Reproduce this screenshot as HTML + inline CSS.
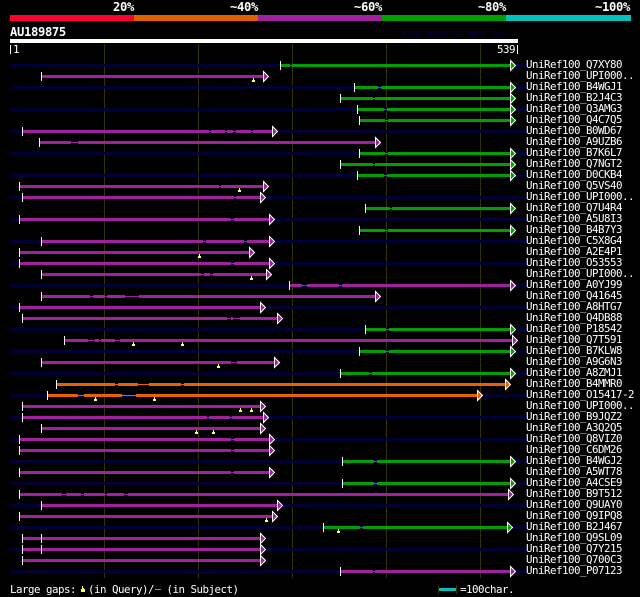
<!DOCTYPE html>
<html lang="en"><head><meta charset="utf-8"><title>AU189875</title>
<style>
html,body{margin:0;padding:0;background:#000;width:640px;height:597px;overflow:hidden}
svg{display:block}
text{font-family:"DejaVu Sans Mono","Liberation Mono",monospace;fill:#fff;font-size:10.8px;letter-spacing:-.5px}
.b{font-weight:bold;font-size:12.2px;letter-spacing:-.35px}
</style></head><body>
<svg width="640" height="597" viewBox="0 0 640 597" xmlns="http://www.w3.org/2000/svg">
<defs>
<path id="t" d="M.5-5L5.5 0L.5 5Z" stroke="#fff" stroke-width="1"/>
<path id="m" d="M0 0h1v2h1v2h-3v-2h1z" fill="#ffff66"/>
</defs>
<rect width="640" height="597" fill="#000"/>
<g shape-rendering="crispEdges">
<rect x="10" y="15" width="124" height="6" fill="#ff0033"/>
<rect x="134" y="15" width="124" height="6" fill="#e06000"/>
<rect x="258" y="15" width="124" height="6" fill="#a020a0"/>
<rect x="382" y="15" width="124" height="6" fill="#00a000"/>
<rect x="506" y="15" width="125" height="6" fill="#00c0c0"/>
<rect x="10" y="39" width="508" height="4" fill="#fff"/>
<path d="M104.5 44V578M198.5 44V578M292.5 44V578M386.5 44V578M480.5 44V578" stroke="#333300" fill="none"/>
<path fill="#000033" d="M10 64H527V67H10ZM10 86H527V89H10ZM10 108H527V111H10ZM10 130H527V133H10ZM10 152H527V155H10ZM10 174H527V177H10ZM10 196H527V199H10ZM10 218H527V221H10ZM10 240H527V243H10ZM10 262H527V265H10ZM10 284H527V287H10ZM10 306H527V309H10ZM10 328H527V331H10ZM10 350H527V353H10ZM10 372H527V375H10ZM10 394H527V397H10ZM10 416H527V419H10ZM10 438H527V441H10ZM10 460H527V463H10ZM10 482H527V485H10ZM10 504H527V507H10ZM10 526H527V529H10ZM10 548H527V551H10ZM10 570H527V573H10Z"/>

<!-- green -->
<path fill="#00a000" d="M280 64H290V67H280ZM292 64H510V67H292ZM354 86H378V89H354ZM381 86H510V89H381ZM340 97H373V100H340ZM375 97H510V100H375ZM357 108H384V111H357ZM387 108H510V111H387ZM359 119H385V122H359ZM388 119H510V122H388ZM359 152H385V155H359ZM388 152H510V155H388ZM340 163H373V166H340ZM375 163H510V166H375ZM357 174H384V177H357ZM387 174H510V177H387ZM365 207H390V210H365ZM392 207H510V210H392ZM359 229H385V232H359ZM388 229H510V232H388ZM365 328H386V331H365ZM389 328H510V331H389ZM359 350H386V353H359ZM389 350H510V353H389ZM340 372H369V375H340ZM372 372H510V375H372ZM342 460H374V463H342ZM377 460H510V463H377ZM342 482H374V485H342ZM377 482H510V485H377ZM323 526H360V529H323ZM363 526H507V529H363Z"/>
<path stroke="#00a000" stroke-width="1" fill="none" d="M290 65.5H292M378 87.5H381M373 98.5H375M384 109.5H387M385 120.5H388M385 153.5H388M373 164.5H375M384 175.5H387M390 208.5H392M385 230.5H388M386 329.5H389M386 351.5H389M369 373.5H372M374 461.5H377M374 483.5H377M360 527.5H363"/>

<!-- purple -->
<path fill="#a020a0" d="M41 75H263V78H41ZM22 130H209V133H22ZM211 130H225V133H211ZM227 130H233V133H227ZM236 130H251V133H236ZM253 130H272V133H253ZM39 141H71V144H39ZM78 141H375V144H78ZM19 185H219V188H19ZM221 185H263V188H221ZM22 196H234V199H22ZM236 196H260V199H236ZM19 218H231V221H19ZM234 218H269V221H234ZM41 240H203V243H41ZM206 240H244V243H206ZM247 240H269V243H247ZM19 251H249V254H19ZM19 262H231V265H19ZM234 262H269V265H234ZM41 273H201V276H41ZM204 273H210V276H204ZM213 273H266V276H213ZM289 284H302V287H289ZM307 284H339V287H307ZM342 284H510V287H342ZM41 295H90V298H41ZM93 295H105V298H93ZM107 295H125V298H107ZM139 295H375V298H139ZM19 306H260V309H19ZM22 317H227V320H22ZM231 317H233V320H231ZM240 317H277V320H240ZM64 339H88V342H64ZM95 339H99V342H95ZM101 339H115V342H101ZM120 339H512V342H120ZM41 361H231V364H41ZM237 361H274V364H237ZM22 405H260V408H22ZM22 416H207V419H22ZM209 416H230V419H209ZM232 416H263V419H232ZM41 427H260V430H41ZM19 438H231V441H19ZM234 438H269V441H234ZM19 449H231V452H19ZM234 449H269V452H234ZM19 471H231V474H19ZM234 471H269V474H234ZM19 493H62V496H19ZM66 493H81V496H66ZM84 493H105V496H84ZM107 493H124V496H107ZM128 493H508V496H128ZM41 504H277V507H41ZM19 515H272V518H19ZM22 537H260V540H22ZM22 548H260V551H22ZM22 559H260V562H22ZM340 570H373V573H340ZM375 570H510V573H375Z"/>
<path stroke="#a020a0" stroke-width="1" fill="none" d="M209 131.5H211M225 131.5H227M233 131.5H236M251 131.5H253M71 142.5H78M219 186.5H221M234 197.5H236M231 219.5H234M203 241.5H206M244 241.5H247M231 263.5H234M201 274.5H204M210 274.5H213M302 285.5H307M339 285.5H342M90 296.5H93M105 296.5H107M125 296.5H139M227 318.5H231M233 318.5H240M88 340.5H95M99 340.5H101M115 340.5H120M231 362.5H237M207 417.5H209M230 417.5H232M231 439.5H234M231 450.5H234M231 472.5H234M62 494.5H66M81 494.5H84M105 494.5H107M124 494.5H128M373 571.5H375"/>

<!-- orange -->
<path fill="#e86000" d="M56 383H115V386H56ZM118 383H138V386H118ZM149 383H181V386H149ZM184 383H505V386H184ZM47 394H78V397H47ZM84 394H122V397H84ZM136 394H477V397H136Z"/>
<path stroke="#e86000" stroke-width="1" fill="none" d="M115 384.5H118M138 384.5H149M181 384.5H184M78 395.5H84M122 395.5H136"/>

<!-- start ticks -->
<path stroke="#fff" stroke-width="1" fill="none" d="M280.5 61v9M41.5 72v9M354.5 83v9M340.5 94v9M357.5 105v9M359.5 116v9M22.5 127v9M39.5 138v9M359.5 149v9M340.5 160v9M357.5 171v9M19.5 182v9M22.5 193v9M365.5 204v9M19.5 215v9M359.5 226v9M41.5 237v9M19.5 248v9M19.5 259v9M41.5 270v9M289.5 281v9M41.5 292v9M19.5 303v9M22.5 314v9M365.5 325v9M64.5 336v9M359.5 347v9M41.5 358v9M340.5 369v9M56.5 380v9M47.5 391v9M22.5 402v9M22.5 413v9M41.5 424v9M19.5 435v9M19.5 446v9M342.5 457v9M19.5 468v9M342.5 479v9M19.5 490v9M41.5 501v9M19.5 512v9M323.5 523v9M22.5 534v9M41.5 534v9M22.5 545v9M41.5 545v9M22.5 556v9M340.5 567v9"/>

<!-- arrowheads -->
<g fill="#00a000">
<use href="#t" x="510" y="65.5"/><use href="#t" x="510" y="87.5"/><use href="#t" x="510" y="98.5"/><use href="#t" x="510" y="109.5"/><use href="#t" x="510" y="120.5"/><use href="#t" x="510" y="153.5"/><use href="#t" x="510" y="164.5"/><use href="#t" x="510" y="175.5"/><use href="#t" x="510" y="208.5"/><use href="#t" x="510" y="230.5"/><use href="#t" x="510" y="329.5"/><use href="#t" x="510" y="351.5"/><use href="#t" x="510" y="373.5"/><use href="#t" x="510" y="461.5"/><use href="#t" x="510" y="483.5"/><use href="#t" x="507" y="527.5"/>
</g>
<g fill="#a020a0">
<use href="#t" x="263" y="76.5"/><use href="#t" x="272" y="131.5"/><use href="#t" x="375" y="142.5"/><use href="#t" x="263" y="186.5"/><use href="#t" x="260" y="197.5"/><use href="#t" x="269" y="219.5"/><use href="#t" x="269" y="241.5"/><use href="#t" x="249" y="252.5"/><use href="#t" x="269" y="263.5"/><use href="#t" x="266" y="274.5"/><use href="#t" x="510" y="285.5"/><use href="#t" x="375" y="296.5"/><use href="#t" x="260" y="307.5"/><use href="#t" x="277" y="318.5"/><use href="#t" x="512" y="340.5"/><use href="#t" x="274" y="362.5"/><use href="#t" x="260" y="406.5"/><use href="#t" x="263" y="417.5"/><use href="#t" x="260" y="428.5"/><use href="#t" x="269" y="439.5"/><use href="#t" x="269" y="450.5"/><use href="#t" x="269" y="472.5"/><use href="#t" x="508" y="494.5"/><use href="#t" x="277" y="505.5"/><use href="#t" x="272" y="516.5"/><use href="#t" x="260" y="538.5"/><use href="#t" x="260" y="549.5"/><use href="#t" x="260" y="560.5"/><use href="#t" x="510" y="571.5"/>
</g>
<g fill="#e86000">
<use href="#t" x="505" y="384.5"/><use href="#t" x="477" y="395.5"/>
</g>

<!-- gap marks -->
<use href="#m" x="253" y="78"/><use href="#m" x="239" y="188"/><use href="#m" x="199" y="254"/><use href="#m" x="251" y="276"/><use href="#m" x="133" y="342"/><use href="#m" x="182" y="342"/><use href="#m" x="218" y="364"/><use href="#m" x="95" y="397"/><use href="#m" x="154" y="397"/><use href="#m" x="240" y="408"/><use href="#m" x="251" y="408"/><use href="#m" x="196" y="430"/><use href="#m" x="213" y="430"/><use href="#m" x="266" y="518"/><use href="#m" x="338" y="529"/>

<!-- footer shapes -->
<path d="M82 586h1v2h1v1h1v3h-4v-3h1z" fill="#ffff66"/>
<rect x="155" y="589" width="6" height="1" fill="#00c0c0"/>
<rect x="438" y="585" width="1" height="9" fill="#333300"/>
<rect x="456" y="585" width="1" height="9" fill="#333300"/>
<rect x="439" y="588" width="17" height="3" fill="#00c0c0"/>
<rect x="10" y="45" width="1" height="9" fill="#fff"/>
<rect x="517" y="45" width="1" height="9" fill="#fff"/>
</g>

<text class="b" x="113" y="11">20%</text>
<text class="b" x="230" y="11">~40%</text>
<text class="b" x="354" y="11">~60%</text>
<text class="b" x="478" y="11">~80%</text>
<text class="b" x="595" y="11">~100%</text>
<text class="b" x="10" y="36">AU189875</text>
<text x="402" y="37" style="font-size:8.3px;letter-spacing:0;fill:#000033;font-weight:bold">AlignView.pm Beta rel.7</text>
<text x="13" y="53">1</text>
<text x="497" y="53">539</text>

<text x="526" y="68">UniRef100_Q7XY80</text>
<text x="526" y="79">UniRef100_UPI000..</text>
<text x="526" y="90">UniRef100_B4WGJ1</text>
<text x="526" y="101">UniRef100_B2J4C3</text>
<text x="526" y="112">UniRef100_Q3AMG3</text>
<text x="526" y="123">UniRef100_Q4C7Q5</text>
<text x="526" y="134">UniRef100_B0WD67</text>
<text x="526" y="145">UniRef100_A9UZB6</text>
<text x="526" y="156">UniRef100_B7K6L7</text>
<text x="526" y="167">UniRef100_Q7NGT2</text>
<text x="526" y="178">UniRef100_D0CKB4</text>
<text x="526" y="189">UniRef100_Q5VS40</text>
<text x="526" y="200">UniRef100_UPI000..</text>
<text x="526" y="211">UniRef100_Q7U4R4</text>
<text x="526" y="222">UniRef100_A5U8I3</text>
<text x="526" y="233">UniRef100_B4B7Y3</text>
<text x="526" y="244">UniRef100_C5X8G4</text>
<text x="526" y="255">UniRef100_A2E4P1</text>
<text x="526" y="266">UniRef100_O53553</text>
<text x="526" y="277">UniRef100_UPI000..</text>
<text x="526" y="288">UniRef100_A0YJ99</text>
<text x="526" y="299">UniRef100_Q41645</text>
<text x="526" y="310">UniRef100_A8HTG7</text>
<text x="526" y="321">UniRef100_Q4DB88</text>
<text x="526" y="332">UniRef100_P18542</text>
<text x="526" y="343">UniRef100_Q7T591</text>
<text x="526" y="354">UniRef100_B7KLW8</text>
<text x="526" y="365">UniRef100_A9G6N3</text>
<text x="526" y="376">UniRef100_A8ZMJ1</text>
<text x="526" y="387">UniRef100_B4MMR0</text>
<text x="526" y="398">UniRef100_O15417-2</text>
<text x="526" y="409">UniRef100_UPI000..</text>
<text x="526" y="420">UniRef100_B9JQZ2</text>
<text x="526" y="431">UniRef100_A3Q2Q5</text>
<text x="526" y="442">UniRef100_Q8VIZ0</text>
<text x="526" y="453">UniRef100_C6DM26</text>
<text x="526" y="464">UniRef100_B4WGJ2</text>
<text x="526" y="475">UniRef100_A5WT78</text>
<text x="526" y="486">UniRef100_A4CSE9</text>
<text x="526" y="497">UniRef100_B9T512</text>
<text x="526" y="508">UniRef100_Q9UAY0</text>
<text x="526" y="519">UniRef100_Q9IPQ8</text>
<text x="526" y="530">UniRef100_B2J467</text>
<text x="526" y="541">UniRef100_Q9SL09</text>
<text x="526" y="552">UniRef100_Q7Y215</text>
<text x="526" y="563">UniRef100_Q700C3</text>
<text x="526" y="574">UniRef100_P07123</text>

<text x="10" y="593">Large gaps:</text>
<text x="88" y="593">(in Query)/</text>
<text x="166.5" y="593">(in Subject)</text>
<text x="460" y="593">=100char.</text>
</svg>
</body></html>
